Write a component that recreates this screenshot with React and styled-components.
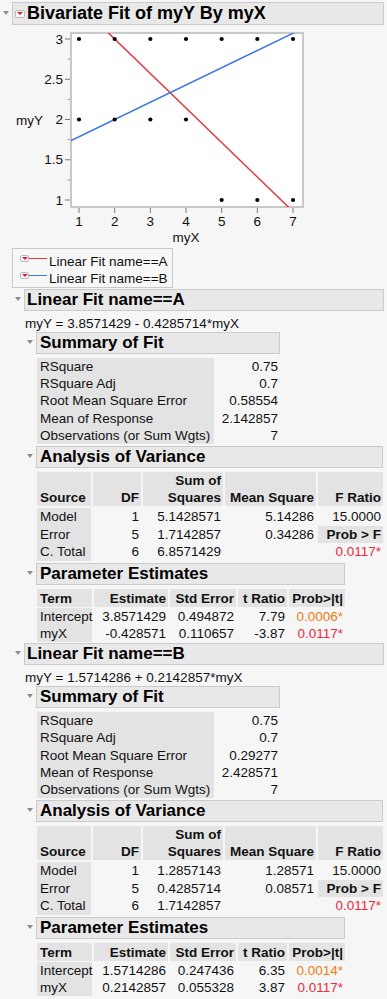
import React from 'react';
import styled, { createGlobalStyle } from 'styled-components';

const GlobalStyle = createGlobalStyle`
  html, body { margin: 0; padding: 0; background: #f6f6f6; }
  body {
    font-family: "Liberation Sans", Arial, Helvetica, sans-serif;
    font-size: 13.5px;
    color: #111;
  }
`;

const Page = styled.div`
  width: 384px;
  padding-top: 2px;
`;

const Node = styled.section`
  width: ${p => (p.$fit ? 'fit-content' : 'auto')};
`;

const HeaderRow = styled.div`
  display: flex;
  align-items: stretch;
`;

const Disclosure = styled.span`
  flex: 0 0 12px;
  display: flex;
  align-items: center;
  padding-left: 3px;
  box-sizing: border-box;
  &::before {
    content: '';
    margin-top: -2px;
    border-left: 3px solid transparent;
    border-right: 3px solid transparent;
    border-top: 4px solid #8c8c8c;
  }
`;

const HeaderBox = styled.div`
  flex: 1;
  display: flex;
  align-items: center;
  gap: 2px;
  height: ${p => p.$h || 22}px;
  box-sizing: border-box;
  padding-left: ${p => p.$pl ?? 3}px;
  background: #e8e8e8;
  border: 1px solid #cbcbcb;
  font-weight: bold;
  font-size: ${p => p.$fs || 17}px;
  color: #000;
  white-space: nowrap;
`;

const MenuIcon = styled.span`
  flex: 0 0 auto;
  display: inline-flex;
  align-items: center;
  justify-content: center;
  width: ${p => p.$w || 10}px;
  height: ${p => p.$h || 8}px;
  box-sizing: border-box;
  border: 1px solid #b9b9b9;
  border-radius: 2px;
  background: #fbfbfb;
  &::before {
    content: '';
    border-left: 3px solid transparent;
    border-right: 3px solid transparent;
    border-top: 3px solid #e0202c;
  }
`;

const Body = styled.div`
  padding-left: 12px;
`;

const ChartSvg = styled.svg`
  display: block;
`;

const Legend = styled.div`
  display: inline-flex;
  flex-direction: column;
  margin: 2px 0 1px;
  padding: 4px 4px 0 7px;
  border: 1px solid #c9c9c9;
  background: #f7f7f7;
`;

const LegendRow = styled.div`
  display: flex;
  align-items: flex-start;
  height: 17px;
  line-height: 17px;
`;

const LegendMark = styled.span`
  display: flex;
  align-items: center;
  margin-top: 2px;
  margin-right: 2px;
`;

const LegendLine = styled.span`
  width: 18px;
  height: 1.5px;
  background: ${p => p.$color};
`;

const Equation = styled.div`
  height: 21px;
  box-sizing: border-box;
  padding: 5px 0 0 1px;
  line-height: 16px;
`;

const DataGrid = styled.div`
  display: grid;
  grid-template-columns: ${p => p.$cols};
  column-gap: 2px;
  margin: ${p => p.$mt ?? 4}px 0 ${p => p.$mb ?? 2}px 1px;
  width: fit-content;
`;

const Cell = styled.div`
  padding: 0 2px 0 3px;
  line-height: ${p => p.$lh || 17.4}px;
  text-align: ${p => p.$align || 'right'};
  background: ${p => (p.$shade ? '#e3e3e3' : 'transparent')};
  font-weight: ${p => (p.$bold ? 'bold' : 'normal')};
  color: ${p => (p.$tone === 'red' ? '#ec2a3a' : p.$tone === 'orange' ? '#ee7c12' : '#111')};
  white-space: nowrap;
`;

const HeadCell = styled.div`
  display: flex;
  flex-direction: column;
  justify-content: flex-end;
  align-items: ${p => (p.$align === 'left' ? 'flex-start' : 'flex-end')};
  height: ${p => p.$h}px;
  margin-bottom: ${p => p.$gap}px;
  padding: 0 2px 0 3px;
  background: #e3e3e3;
  font-weight: bold;
  line-height: 17px;
  white-space: nowrap;
  color: #111;
`;

/* ---------- chart ---------- */
const px = x => 79 + (x - 1) * 35.667;
const py = y => 39 + (3 - y) * 80.5;
const points = [
  [1, 3], [2, 3], [3, 3], [4, 3], [5, 3], [6, 3], [7, 3],
  [1, 2], [2, 2], [3, 2], [4, 2],
  [5, 1], [6, 1], [7, 1],
];
const lineA = x => 3.8571429 - 0.4285714 * x;
const lineB = x => 1.5714286 + 0.2142857 * x;

function Chart() {
  const font = { fontFamily: '"Liberation Sans", Arial, sans-serif', fontSize: 13.5, fill: '#111' };
  const majorY = [1, 1.5, 2, 2.5, 3];
  const minorY = [1.25, 1.75, 2.25, 2.75];
  return (
    <ChartSvg width="300" height="221" viewBox="12 25 300 221">
      <defs>
        <clipPath id="frameClip">
          <rect x="71" y="33" width="232" height="174" />
        </clipPath>
      </defs>
      <rect x="71" y="33" width="232" height="174" fill="#fff" stroke="#c8c8c8" strokeWidth="2" />
      {majorY.map(v => (
        <g key={v}>
          <line x1="65" x2="70" y1={py(v)} y2={py(v)} stroke="#777" strokeWidth="1" />
          <text x="63" y={py(v)} textAnchor="end" dominantBaseline="central" style={font}>{v}</text>
        </g>
      ))}
      {minorY.map(v => (
        <line key={v} x1="67.5" x2="70" y1={py(v)} y2={py(v)} stroke="#999" strokeWidth="1" />
      ))}
      {[1, 2, 3, 4, 5, 6, 7].map(v => (
        <g key={v}>
          <line x1={px(v)} x2={px(v)} y1="208" y2="213" stroke="#777" strokeWidth="1" />
          <text x={px(v)} y="221" textAnchor="middle" dominantBaseline="central" style={font}>{v}</text>
        </g>
      ))}
      <text x="186" y="237" textAnchor="middle" dominantBaseline="central" style={font}>myX</text>
      <text x="16" y="120" dominantBaseline="central" style={font}>myY</text>
      <g clipPath="url(#frameClip)">
        <line x1={px(0.5)} y1={py(lineA(0.5))} x2={px(7.6)} y2={py(lineA(7.6))} stroke="#e0383f" strokeWidth="1.5" />
        <line x1={px(0.5)} y1={py(lineB(0.5))} x2={px(7.6)} y2={py(lineB(7.6))} stroke="#3f78e6" strokeWidth="1.5" />
        {points.map(([x, y], i) => (
          <circle key={i} cx={px(x)} cy={py(y)} r="2.1" fill="#000" />
        ))}
      </g>
    </ChartSvg>
  );
}

/* ---------- report parts ---------- */
function Outline({ title, level = 1, fit, children, icon }) {
  return (
    <Node $fit={fit}>
      <HeaderRow>
        <Disclosure />
        <HeaderBox $h={level === 0 ? 23 : 22} $pl={level === 2 ? 3 : 2} $fs={level === 0 ? 18 : 17}>
          {icon && <MenuIcon />}
          <span>{title}</span>
        </HeaderBox>
      </HeaderRow>
      <Body>{children}</Body>
    </Node>
  );
}

function SummaryTable({ rows }) {
  return (
    <DataGrid $cols="177px 64px" $mb={2}>
      {rows.map(([label, value]) => (
        <React.Fragment key={label}>
          <Cell $align="left" $shade $lh={17.2}>{label}</Cell>
          <Cell $lh={17.2}>{value}</Cell>
        </React.Fragment>
      ))}
    </DataGrid>
  );
}

function AnovaTable({ rows }) {
  const heads = [
    { t: ['Source'], a: 'left' },
    { t: ['DF'] },
    { t: ['Sum of', 'Squares'] },
    { t: ['Mean Square'] },
    { t: ['F Ratio'] },
  ];
  return (
    <DataGrid $cols="54px 48px 80px 91px 65px" $mb={2}>
      {heads.map((h, i) => (
        <HeadCell key={i} $h={34} $gap={2} $align={h.a}>
          {h.t.map(line => <span key={line}>{line}</span>)}
        </HeadCell>
      ))}
      {rows.map(r => (
        <React.Fragment key={r.source}>
          <Cell $align="left" $shade $lh={17.5}>{r.source}</Cell>
          <Cell $lh={17.5}>{r.df}</Cell>
          <Cell $lh={17.5}>{r.ss}</Cell>
          <Cell $lh={17.5}>{r.ms}</Cell>
          <Cell $lh={17.5} $shade={r.fShade} $bold={r.fShade} $tone={r.fTone}>{r.f}</Cell>
        </React.Fragment>
      ))}
    </DataGrid>
  );
}

function ParamTable({ rows }) {
  const heads = ['Term', 'Estimate', 'Std Error', 't Ratio', 'Prob>|t|'];
  return (
    <DataGrid $cols="55px 74px 66px 49px 56px" $mb={1}>
      {heads.map((h, i) => (
        <HeadCell key={h} $h={18} $gap={1} $align={i === 0 ? 'left' : 'right'}>
          <span>{h}</span>
        </HeadCell>
      ))}
      {rows.map(r => (
        <React.Fragment key={r.term}>
          <Cell $align="left" $shade $lh={17.3}>{r.term}</Cell>
          <Cell $lh={17.3}>{r.est}</Cell>
          <Cell $lh={17.3}>{r.se}</Cell>
          <Cell $lh={17.3}>{r.t}</Cell>
          <Cell $lh={17.3} $tone={r.tone}>{r.p}</Cell>
        </React.Fragment>
      ))}
    </DataGrid>
  );
}

function FitSection({ fit }) {
  return (
    <Outline title={fit.title}>
      <Equation>{fit.eq}</Equation>
      <Outline title="Summary of Fit" level={2} fit>
        <SummaryTable rows={fit.summary} />
      </Outline>
      <Outline title="Analysis of Variance" level={2} fit>
        <AnovaTable rows={fit.anova} />
      </Outline>
      <Outline title="Parameter Estimates" level={2} fit>
        <ParamTable rows={fit.params} />
      </Outline>
    </Outline>
  );
}

const fits = [
  {
    title: 'Linear Fit name==A',
    eq: 'myY = 3.8571429 - 0.4285714*myX',
    summary: [
      ['RSquare', '0.75'],
      ['RSquare Adj', '0.7'],
      ['Root Mean Square Error', '0.58554'],
      ['Mean of Response', '2.142857'],
      ['Observations (or Sum Wgts)', '7'],
    ],
    anova: [
      { source: 'Model', df: '1', ss: '5.1428571', ms: '5.14286', f: '15.0000' },
      { source: 'Error', df: '5', ss: '1.7142857', ms: '0.34286', f: 'Prob > F', fShade: true },
      { source: 'C. Total', df: '6', ss: '6.8571429', ms: '', f: '0.0117*', fTone: 'red' },
    ],
    params: [
      { term: 'Intercept', est: '3.8571429', se: '0.494872', t: '7.79', p: '0.0006*', tone: 'orange' },
      { term: 'myX', est: '-0.428571', se: '0.110657', t: '-3.87', p: '0.0117*', tone: 'red' },
    ],
  },
  {
    title: 'Linear Fit name==B',
    eq: 'myY = 1.5714286 + 0.2142857*myX',
    summary: [
      ['RSquare', '0.75'],
      ['RSquare Adj', '0.7'],
      ['Root Mean Square Error', '0.29277'],
      ['Mean of Response', '2.428571'],
      ['Observations (or Sum Wgts)', '7'],
    ],
    anova: [
      { source: 'Model', df: '1', ss: '1.2857143', ms: '1.28571', f: '15.0000' },
      { source: 'Error', df: '5', ss: '0.4285714', ms: '0.08571', f: 'Prob > F', fShade: true },
      { source: 'C. Total', df: '6', ss: '1.7142857', ms: '', f: '0.0117*', fTone: 'red' },
    ],
    params: [
      { term: 'Intercept', est: '1.5714286', se: '0.247436', t: '6.35', p: '0.0014*', tone: 'orange' },
      { term: 'myX', est: '0.2142857', se: '0.055328', t: '3.87', p: '0.0117*', tone: 'red' },
    ],
  },
];

export default function App() {
  return (
    <>
      <GlobalStyle />
      <Page>
        <Outline title="Bivariate Fit of myY By myX" level={0} icon>
          <Chart />
          <Legend>
            <LegendRow>
              <LegendMark><MenuIcon $w={9} $h={7} /><LegendLine $color="#e0383f" /></LegendMark>
              Linear Fit name==A
            </LegendRow>
            <LegendRow>
              <LegendMark><MenuIcon $w={9} $h={7} /><LegendLine $color="#3f78e6" /></LegendMark>
              Linear Fit name==B
            </LegendRow>
          </Legend>
          {fits.map(f => <FitSection key={f.title} fit={f} />)}
        </Outline>
      </Page>
    </>
  );
}
